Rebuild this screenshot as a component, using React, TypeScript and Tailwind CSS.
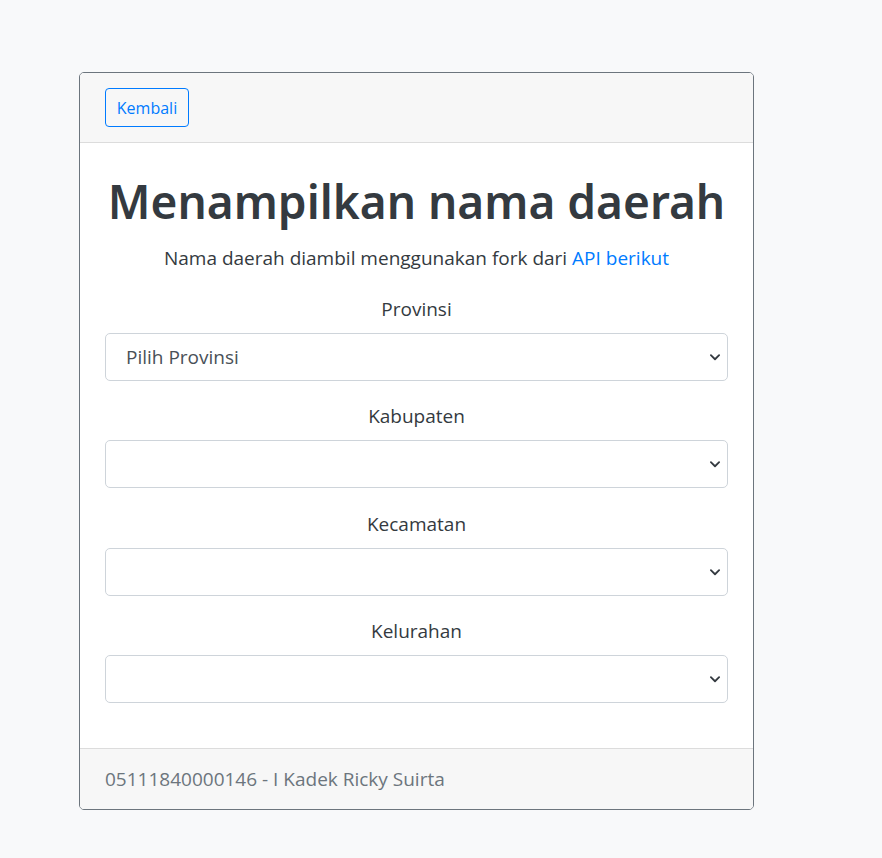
import React from "react";

const Chevron = () => (
  <svg width="12" height="12" viewBox="0 0 16 16" className="absolute right-[6px] top-1/2 -translate-y-1/2 pointer-events-none">
    <path d="M2.5 5.5l5.5 5.5 5.5-5.5" fill="none" stroke="#343a40" strokeWidth="2.4" strokeLinecap="round" strokeLinejoin="round" />
  </svg>
);

const Field = ({ label, value }: { label: string; value?: string }) => (
  <div className="mb-[20px]">
    <div className="text-center text-[19px] leading-[30px] text-[#343a40] mb-[9px]">{label}</div>
    <div className="relative h-[48px] rounded-[5px] border border-[#ced4da] bg-white flex items-center pl-[20px]">
      <span className="text-[19px] text-[#495057]">{value ?? ""}</span>
      <Chevron />
    </div>
  </div>
);

export default function App() {
  return (
    <div
      className="min-h-[858px] w-full bg-[#f8f9fa] pt-[72px] pl-[79px]"
      style={{ fontFamily: '"Open Sans", "Noto Sans", "Liberation Sans", sans-serif' }}
    >
      <div className="w-[675px] rounded-[5px] border border-[#6c757d] bg-white overflow-hidden">
        <div className="h-[70px] bg-[#f7f7f7] border-b border-[#dcdcdc] px-[25px] pt-[15px]">
          <button className="h-[39px] w-[84px] rounded-[4px] border border-[#007bff] text-[#007bff] text-[16px] bg-transparent">
            Kembali
          </button>
        </div>
        <div className="px-[25px] pt-[25px] pb-[25px]">
          <h1
            className="text-center text-[#343a40] text-[46px] leading-[67px] font-semibold whitespace-nowrap mb-[8px]"
            style={{ fontFamily: '"Noto Sans", "Open Sans", sans-serif' }}
          >
            Menampilkan nama daerah
          </h1>
          <p className="text-center text-[19px] leading-[30px] text-[#343a40] mb-[21px]">
            Nama daerah diambil menggunakan fork dari <span className="text-[#007bff]">API berikut</span>
          </p>
          <Field label="Provinsi" value="Pilih Provinsi" />
          <Field label="Kabupaten" />
          <div className="h-px" />
          <Field label="Kecamatan" />
          <Field label="Kelurahan" />
        </div>
        <div className="h-[61px] bg-[#f7f7f7] border-t border-[#dcdcdc] px-[25px] flex items-center">
          <span className="text-[19px] text-[#6c757d]">05111840000146 - I Kadek Ricky Suirta</span>
        </div>
      </div>
    </div>
  );
}
